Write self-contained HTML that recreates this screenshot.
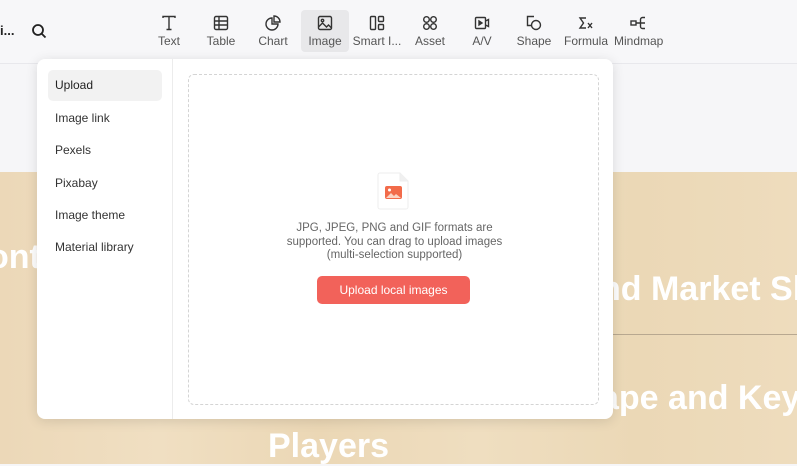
<!DOCTYPE html>
<html><head><meta charset="utf-8"><style>
*{margin:0;padding:0;box-sizing:border-box}
body{width:797px;height:464px;overflow:hidden;position:relative;background:#f6f6f8;font-family:"Liberation Sans",sans-serif}
.top{position:absolute;left:0;top:0;width:797px;height:64px;background:#f7f7f9;border-bottom:1px solid #e8e8ec}
.wood{position:absolute;left:0;top:172px;width:797px;height:292px;background:linear-gradient(90deg,#ecd8b8,#f0dfc2 20%,#ebd7b5 40%,#efdec0 60%,#ebd8b6 80%,#eedcbd)}
.big{position:absolute;color:#fff;font-size:34px;font-family:"Liberation Sans",sans-serif;font-weight:bold;white-space:nowrap}
.tool{position:absolute;top:12px;width:48px;height:42px;text-align:center;font-size:12px;color:#555}
.tool svg{display:block;margin:3px auto 3px;width:16px;height:16px}
.tool.sel{background:#e8e8ea;border-radius:4px;top:10px;padding-top:2px}
.panel{position:absolute;left:37px;top:59px;width:576px;height:360px;background:#fff;border-radius:8px;box-shadow:0 2px 12px rgba(0,0,0,.12)}
.side{position:absolute;left:0;top:0;width:136px;height:360px;border-right:1px solid #ececec}
.it{position:absolute;left:18px;font-size:12px;color:#333}
.drop{position:absolute;left:151px;top:15px;width:411px;height:331px;border:1px dashed #d4d4d4;border-radius:6px}
.txt{position:absolute;left:0;width:411px;top:147px;text-align:center;font-size:11.5px;color:#666;line-height:13.5px}
.btn{position:absolute;left:128px;top:201px;width:153px;height:28px;background:#f2625a;color:#fff;font-size:12px;border-radius:5px;text-align:center;line-height:28px}
</style></head><body>
<div class="top">
<div style="position:absolute;left:0;top:23px;font-size:13px;color:#222;font-weight:bold">i...</div>
<svg style="position:absolute;left:31px;top:23px" width="16" height="16" viewBox="0 0 16 16" fill="none" stroke="#222" stroke-width="1.8"><circle cx="7" cy="7" r="5"/><path d="M11 11l3.5 3.5"/></svg>
<div class="tool" style="left:145px"><svg viewBox="0 0 16 16" fill="none" stroke="#333" stroke-width="1.4"><path d="M2 3V1.5h12V3M8 1.5V14.5M5.5 14.5h5"/></svg>Text</div>
<div class="tool" style="left:197px"><svg viewBox="0 0 16 16" fill="none" stroke="#333" stroke-width="1.4"><rect x="1.5" y="1.5" width="13" height="13" rx="1.5"/><path d="M1.5 6h13M1.5 10h13M6 1.5v13"/></svg>Table</div>
<div class="tool" style="left:249px"><svg viewBox="0 0 16 16" fill="none" stroke="#333" stroke-width="1.4"><path d="M7 3a6 6 0 1 0 6 6H7z"/><path d="M9 1a6 6 0 0 1 6 6H9z"/></svg>Chart</div>
<div class="tool sel" style="left:301px"><svg viewBox="0 0 16 16" fill="none" stroke="#333" stroke-width="1.4"><rect x="1.5" y="1.5" width="13" height="13" rx="1.5"/><circle cx="5.5" cy="5.5" r="1.2"/><path d="M1.5 12l4-4 4 4 2-2 3 3"/></svg>Image</div>
<div class="tool" style="left:352px;width:50px"><svg viewBox="0 0 16 16" fill="none" stroke="#333" stroke-width="1.4"><rect x="1.5" y="1.5" width="5" height="13" rx="1"/><rect x="9.5" y="1.5" width="5" height="5" rx="1"/><rect x="9.5" y="9.5" width="5" height="5" rx="1"/></svg>Smart I...</div>
<div class="tool" style="left:406px"><svg viewBox="0 0 16 16" fill="none" stroke="#333" stroke-width="1.4"><circle cx="4.5" cy="4.5" r="2.8"/><circle cx="11.5" cy="4.5" r="2.8"/><circle cx="4.5" cy="11.5" r="2.8"/><circle cx="11.5" cy="11.5" r="2.8"/></svg>Asset</div>
<div class="tool" style="left:458px"><svg viewBox="0 0 16 16" fill="none" stroke="#333" stroke-width="1.4"><rect x="1.5" y="2.5" width="10" height="11" rx="1"/><path d="M5 6l3 2-3 2z" fill="#333"/><path d="M11.5 6l3-1.5v7l-3-1.5"/></svg>A/V</div>
<div class="tool" style="left:510px"><svg viewBox="0 0 16 16" fill="none" stroke="#333" stroke-width="1.4"><path d="M8 1.5H1.5v9h4"/><circle cx="10" cy="10" r="4.5"/></svg>Shape</div>
<div class="tool" style="left:562px"><svg viewBox="0 0 16 16" fill="none" stroke="#333" stroke-width="1.4"><path d="M8 3H2l3.5 5L2 13h6M10 8l4 5M14 8l-4 5"/></svg>Formula</div>
<div class="tool" style="left:614px"><svg viewBox="0 0 16 16" fill="none" stroke="#333" stroke-width="1.4"><rect x="1" y="6" width="5" height="4"/><path d="M6 8h4M15 2.5h-2.5a2 2 0 0 0-2 2v7a2 2 0 0 0 2 2H15M10.5 8H15"/></svg>Mindmap</div>
</div>
<div class="wood">
<div class="big" style="left:-12px;top:66px">ont</div>
<div class="big" style="left:600px;top:98px">nd Market Sh</div>
<div style="position:absolute;left:600px;top:162px;width:197px;height:1px;background:#b8a890"></div>
<div class="big" style="left:600px;top:207px">ape and Key</div>
<div class="big" style="left:268px;top:255px">Players</div>
</div>
<div class="panel">
<div class="side">
<div style="position:absolute;left:11px;top:11px;width:114px;height:31px;background:#f2f2f2;border-radius:5px"></div>
<div class="it" style="top:19px;color:#222">Upload</div>
<div class="it" style="top:52px">Image link</div>
<div class="it" style="top:84px">Pexels</div>
<div class="it" style="top:117px">Pixabay</div>
<div class="it" style="top:149px">Image theme</div>
<div class="it" style="top:181px">Material library</div>
</div>
<div class="drop">
<svg style="position:absolute;left:187px;top:96px" width="36" height="40" viewBox="0 0 36 40"><path d="M4 2h20l8 8v26a2 2 0 0 1-2 2H4a2 2 0 0 1-2-2V4a2 2 0 0 1 2-2z" fill="#fff" stroke="#eee"/><path d="M24 2v8h8" fill="#f0f0f0" stroke="#eee"/><rect x="9" y="15" width="17" height="13" rx="2" fill="#f26b4a"/><circle cx="13.5" cy="19" r="1.5" fill="#fff"/><path d="M10 27l5-5 3 3 2-2 5 4z" fill="#fbd4c4"/></svg>
<div class="txt">JPG, JPEG, PNG and GIF formats are<br>supported. You can drag to upload images<br>(multi-selection supported)</div>
<div class="btn">Upload local images</div>
</div>
</div>
</body></html>
